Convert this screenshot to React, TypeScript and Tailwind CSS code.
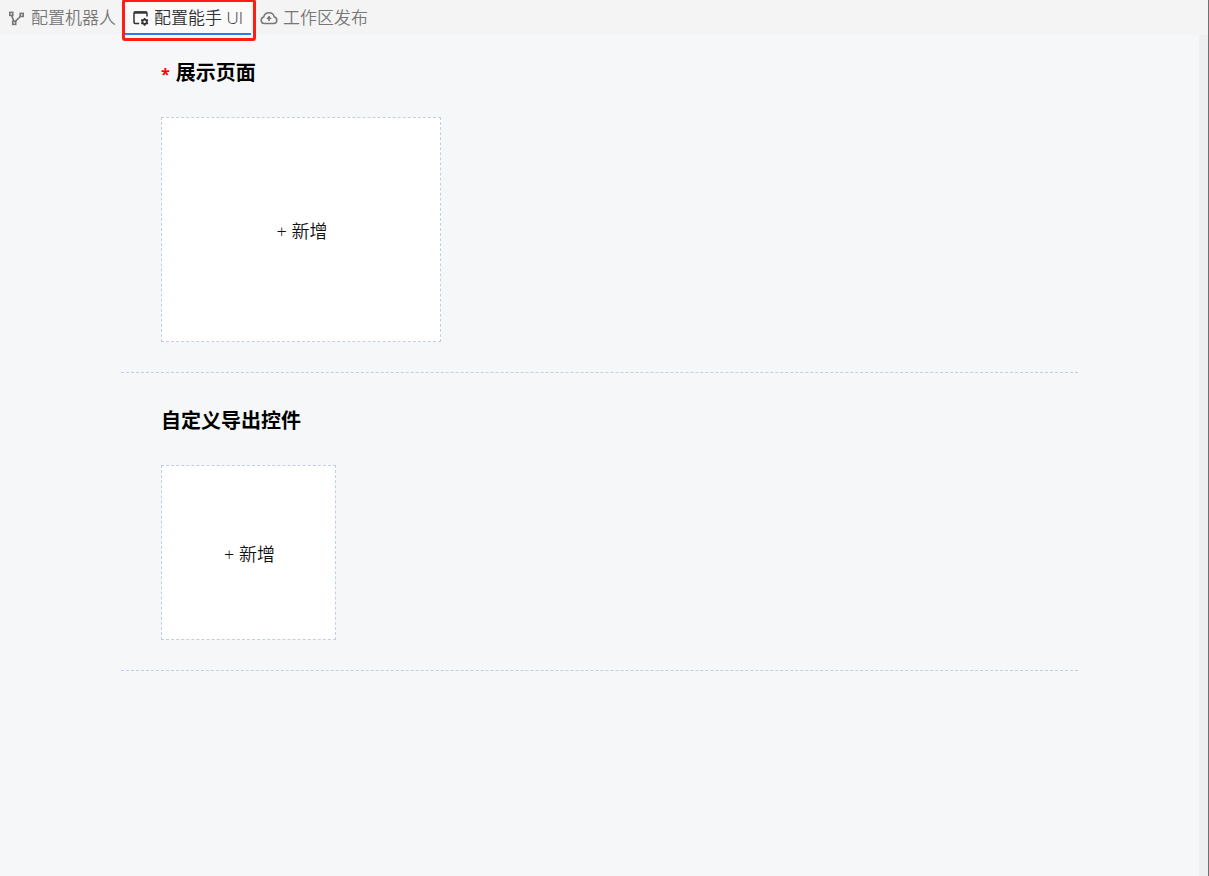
import React, { useState } from "react";

interface IconProps {
  className?: string;
}

interface TabItem {
  key: string;
  label: string;
  icon: React.ReactNode;
}

interface SectionProps {
  title: string;
  required?: boolean;
  children: React.ReactNode;
}

const FlowIcon: React.FC<IconProps> = ({ className }) => (
  <svg viewBox="0 0 18 18" fill="none" stroke="currentColor" strokeWidth="1.6" className={className}>
    <rect x="1.8" y="3.4" width="3" height="3" />
    <rect x="12.2" y="4.4" width="3" height="3" />
    <rect x="4.7" y="12.4" width="3" height="3" />
    <path d="M3.6 6.4 L5.9 12.4 M7.4 12.4 L12.6 7.2" />
  </svg>
);

const WindowGearIcon: React.FC<IconProps> = ({ className }) => (
  <svg viewBox="0 0 16 16" fill="none" stroke="currentColor" strokeWidth="1.5" className={className}>
    <path d="M6.2 13.4 H2.2 Q1 13.4 1 12.2 V3.2 Q1 1.9 2.2 1.9 H12.8 Q14 1.9 14 3.2 V6.4" />
    <path d="M1 2.6 H14" strokeWidth="2.2" />
    <circle cx="11.6" cy="11.8" r="2.2" strokeWidth="1.8" />
    <path
      d="M11.6 7.9 V9.2 M11.6 14.4 V15.7 M8.2 9.8 L9.4 10.5 M13.8 13.1 L15 13.8 M8.2 13.8 L9.4 13.1 M13.8 10.5 L15 9.8"
      strokeWidth="1.6"
    />
  </svg>
);

const CloudUploadIcon: React.FC<IconProps> = ({ className }) => (
  <svg
    viewBox="0 0 18 18"
    fill="none"
    stroke="currentColor"
    strokeWidth="1.5"
    strokeLinejoin="round"
    className={className}
  >
    <path d="M4.4 14.6 H13.6 A3.3 3.3 0 0 0 14.3 8.1 A5.4 5.4 0 0 0 3.7 8.1 A3.3 3.3 0 0 0 4.4 14.6 Z" />
    <path d="M9 7.6 V12" strokeWidth="1.7" />
    <path d="M6.2 10 L9 6.8 L11.8 10 Z" fill="currentColor" stroke="none" />
  </svg>
);

const tabs: TabItem[] = [
  { key: "robot", label: "配置机器人", icon: <FlowIcon className="size-[18px]" /> },
  { key: "ui", label: "配置能手 UI", icon: <WindowGearIcon className="size-4" /> },
  { key: "publish", label: "工作区发布", icon: <CloudUploadIcon className="size-[18px]" /> },
];

const Section: React.FC<SectionProps> = ({ title, required, children }) => (
  <section className="border-b border-dashed border-[#bdd0e9] px-10 pb-[30px]">
    <h2 className="mb-7 text-xl leading-8 font-bold text-black">
      {required && <span className="mr-[6px] text-base text-[#ff0000]">*</span>}
      {title}
    </h2>
    {children}
  </section>
);

const App: React.FC = () => {
  const [activeTab, setActiveTab] = useState("ui");

  return (
    <div className="flex min-h-screen flex-col border-r border-[#707070] bg-[#f5f7f9] font-['Open_Sans','Noto_Sans_CJK_SC',sans-serif]">
      {/* Tab bar */}
      <nav className="flex h-[35px] gap-px bg-[#f4f4f4]">
        {tabs.map((tab) => {
          const isActive = tab.key === activeTab;

          return (
            <button
              key={tab.key}
              type="button"
              onClick={() => setActiveTab(tab.key)}
              className={`relative flex items-center gap-[5px] border-b-2 px-2 pt-[2px] text-[17px] leading-6 font-[350] whitespace-nowrap ${
                isActive
                  ? "border-[#2b7de9] bg-[#fafafa] text-[#333333]"
                  : "border-transparent text-[#777777]"
              }`}
            >
              {tab.icon}
              {tab.label}
              {isActive && (
                <span className="pointer-events-none absolute -top-px -right-[5px] -bottom-2 -left-[3px] z-10 rounded-[3px] border-3 border-[#ff1d14]" />
              )}
            </button>
          );
        })}
      </nav>

      {/* Content with the scrollbar track on its right */}
      <div className="flex flex-1">
        <main className="flex flex-1 flex-col gap-8 px-[121px] pt-[22px]">
          <Section title="展示页面" required>
            <button
              type="button"
              className="h-[225px] w-[280px] border border-dashed border-[#bdd0e9] bg-white pt-[2px] pl-[2px] text-lg font-[350] text-[#111111]"
            >
              + 新增
            </button>
          </Section>
          <Section title="自定义导出控件">
            <button
              type="button"
              className="size-[175px] border border-dashed border-[#bdd0e9] bg-white pt-[2px] pl-[2px] text-lg font-[350] text-[#111111]"
            >
              + 新增
            </button>
          </Section>
        </main>
        <div className="w-[9px] bg-[#eeeff1]" />
      </div>
    </div>
  );
};

export default App;
